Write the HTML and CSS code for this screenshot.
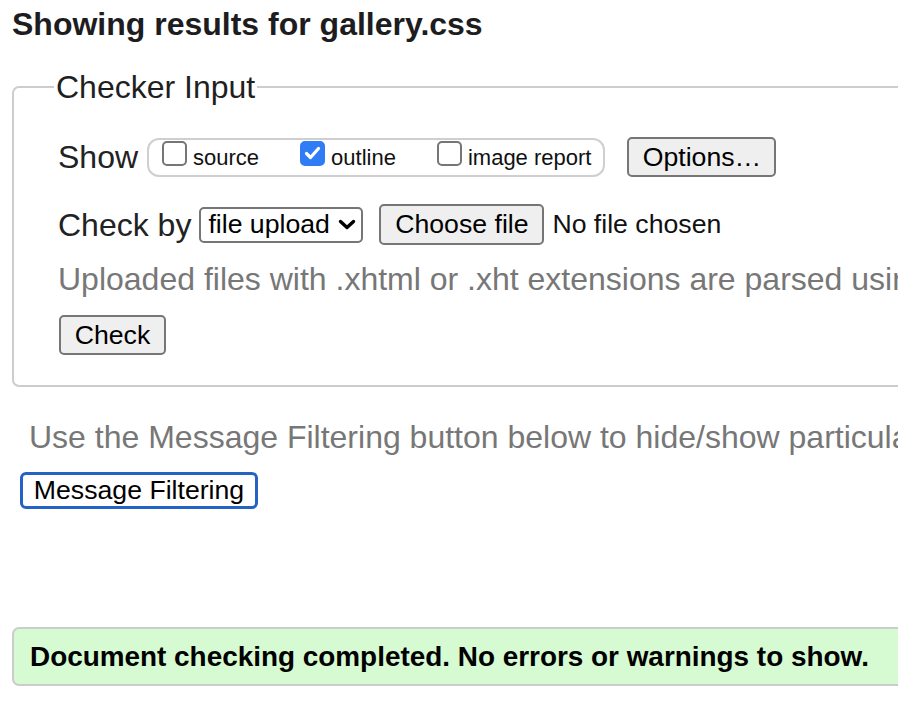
FILE: index.html
```html
<!DOCTYPE html>
<html lang="en">
<head>
<meta charset="utf-8">
<title>Showing results for gallery.css</title>
<link rel="stylesheet" href="styles.css">
</head>
<body>
<div class="page">
  <h1 class="title">Showing results for gallery.css</h1>
  <fieldset class="checker">
    <legend class="legend">Checker Input</legend>
    <div class="row row-show">
      <span class="label">Show</span>
      <div class="pill">
        <label class="opt"><span class="cb"></span>source</label>
        <label class="opt"><span class="cb checked"><svg viewBox="0 0 25 25" width="25" height="25"><path d="M6.5 12.5 L10.5 16.5 L18.5 7.5" fill="none" stroke="#fff" stroke-width="3.2" stroke-linecap="round" stroke-linejoin="round"/></svg></span>outline</label>
        <label class="opt"><span class="cb"></span>image report</label>
      </div>
      <button class="btn btn-options">Options…</button>
    </div>
    <div class="row row-check">
      <span class="label">Check by</span>
      <div class="select">file upload<svg class="chev" viewBox="0 0 18 11" width="18" height="11"><path d="M2.5 2.5 L9 8.5 L15.5 2.5" fill="none" stroke="#000" stroke-width="3.4" stroke-linecap="round" stroke-linejoin="round"/></svg></div>
      <button class="btn btn-file">Choose file</button>
      <span class="nofile">No file chosen</span>
    </div>
    <p class="hint">Uploaded files with .xhtml or .xht extensions are parsed using the XML parser.</p>
    <button class="btn btn-check">Check</button>
  </fieldset>
  <p class="hint hint-outer">Use the Message Filtering button below to hide/show particular messages, and to see total counts of errors and warnings.</p>
  <button class="btn btn-filter">Message Filtering</button>
  <p class="success">Document checking completed. No errors or warnings to show.</p>
</div>
</body>
</html>
```
FILE: styles.css
```css
html, body {
  margin: 0;
  padding: 0;
  overflow: hidden;
  background: #fff;
}

body {
  font-family: "Liberation Sans", Arial, Helvetica, sans-serif;
  color: #222;
}

.page {
  width: 1400px;
  padding-left: 12px;
}

.title {
  font-size: 32px;
  line-height: 36px;
  font-weight: bold;
  color: #1d1d21;
  margin: 6px 0 27px 0;
}

.checker {
  margin: 0;
  width: 1200px;
  min-width: 0;
  border: 2px solid #cdcdcd;
  border-radius: 7px;
  padding: 32px 0 30px 44px;
}

.legend {
  font-size: 32px;
  line-height: 36px;
  padding: 0 2px;
  margin-left: -4px;
  color: #1f1f1f;
}

.row {
  display: flex;
  align-items: center;
}

.row-show {
  height: 40px;
}

.row-check {
  height: 41px;
  margin-top: 27px;
}

.label {
  font-size: 32px;
  line-height: 40px;
  color: #222;
  white-space: nowrap;
}

.row-show .label {
  margin-right: 9px;
}

.row-check .label {
  margin-right: 8px;
}

.pill {
  display: flex;
  align-items: center;
  box-sizing: border-box;
  height: 39px;
  border: 2px solid #cfcfcf;
  border-radius: 12px;
  padding: 0 12px 0 13px;
  gap: 41px;
  margin-right: 22px;
}

.opt {
  display: block;
  font-size: 22px;
  color: #111;
  white-space: nowrap;
  padding-bottom: 2px;
}

.cb {
  display: inline-block;
  vertical-align: baseline;
  box-sizing: border-box;
  width: 25px;
  height: 25px;
  border: 2px solid #767676;
  border-radius: 5px;
  background: #fff;
  margin-right: 6px;
  margin-bottom: -1px;
  position: relative;
}

.cb.checked {
  background: #2f7cf6;
  border-color: #2f7cf6;
}

.cb.checked svg {
  position: absolute;
  left: -2px;
  top: -2px;
}

.btn {
  -webkit-appearance: none;
  appearance: none;
  font-family: "Liberation Sans", Arial, Helvetica, sans-serif;
  font-size: 26.67px;
  color: #000;
  background: #efefef;
  border: 2px solid #767676;
  border-radius: 5px;
  box-sizing: border-box;
  height: 40px;
  padding: 0 13px;
  margin: 0;
  white-space: nowrap;
}

.btn-options {
  width: 149px;
}

.btn-file {
  height: 41px;
  width: 165px;
  margin-left: 16px;
}

.select {
  display: flex;
  align-items: center;
  box-sizing: border-box;
  width: 164px;
  height: 36px;
  border: 2px solid #767676;
  border-radius: 5px;
  background: #fff;
  padding: 0 0 0 7px;
  font-size: 26.67px;
  color: #000;
  white-space: nowrap;
}

.chev {
  margin-left: 8px;
}

.nofile {
  font-size: 26.67px;
  color: #111;
  margin-left: 8px;
  white-space: nowrap;
}

.hint {
  font-size: 32px;
  line-height: 36px;
  color: #777;
  margin: 16px 0 18px 0;
  white-space: nowrap;
}

.btn-check {
  width: 107px;
  margin-left: 1px;
}

.hint-outer {
  margin: 32px 0 17px 17px;
}

.btn-filter {
  display: block;
  width: 238px;
  height: 37px;
  margin-left: 8px;
  background: #fff;
  border: 3px solid #2462c3;
  border-radius: 6px;
  padding: 0 10px;
}

.success {
  margin: 118px 0 0 0;
  width: 1200px;
  box-sizing: border-box;
  background: #d6fad1;
  border: 2px solid #cccccc;
  border-radius: 7px;
  padding: 11px 14px 11px 16px;
  font-size: 27.9px;
  line-height: 33px;
  font-weight: bold;
  color: #000;
  white-space: nowrap;
}
```
